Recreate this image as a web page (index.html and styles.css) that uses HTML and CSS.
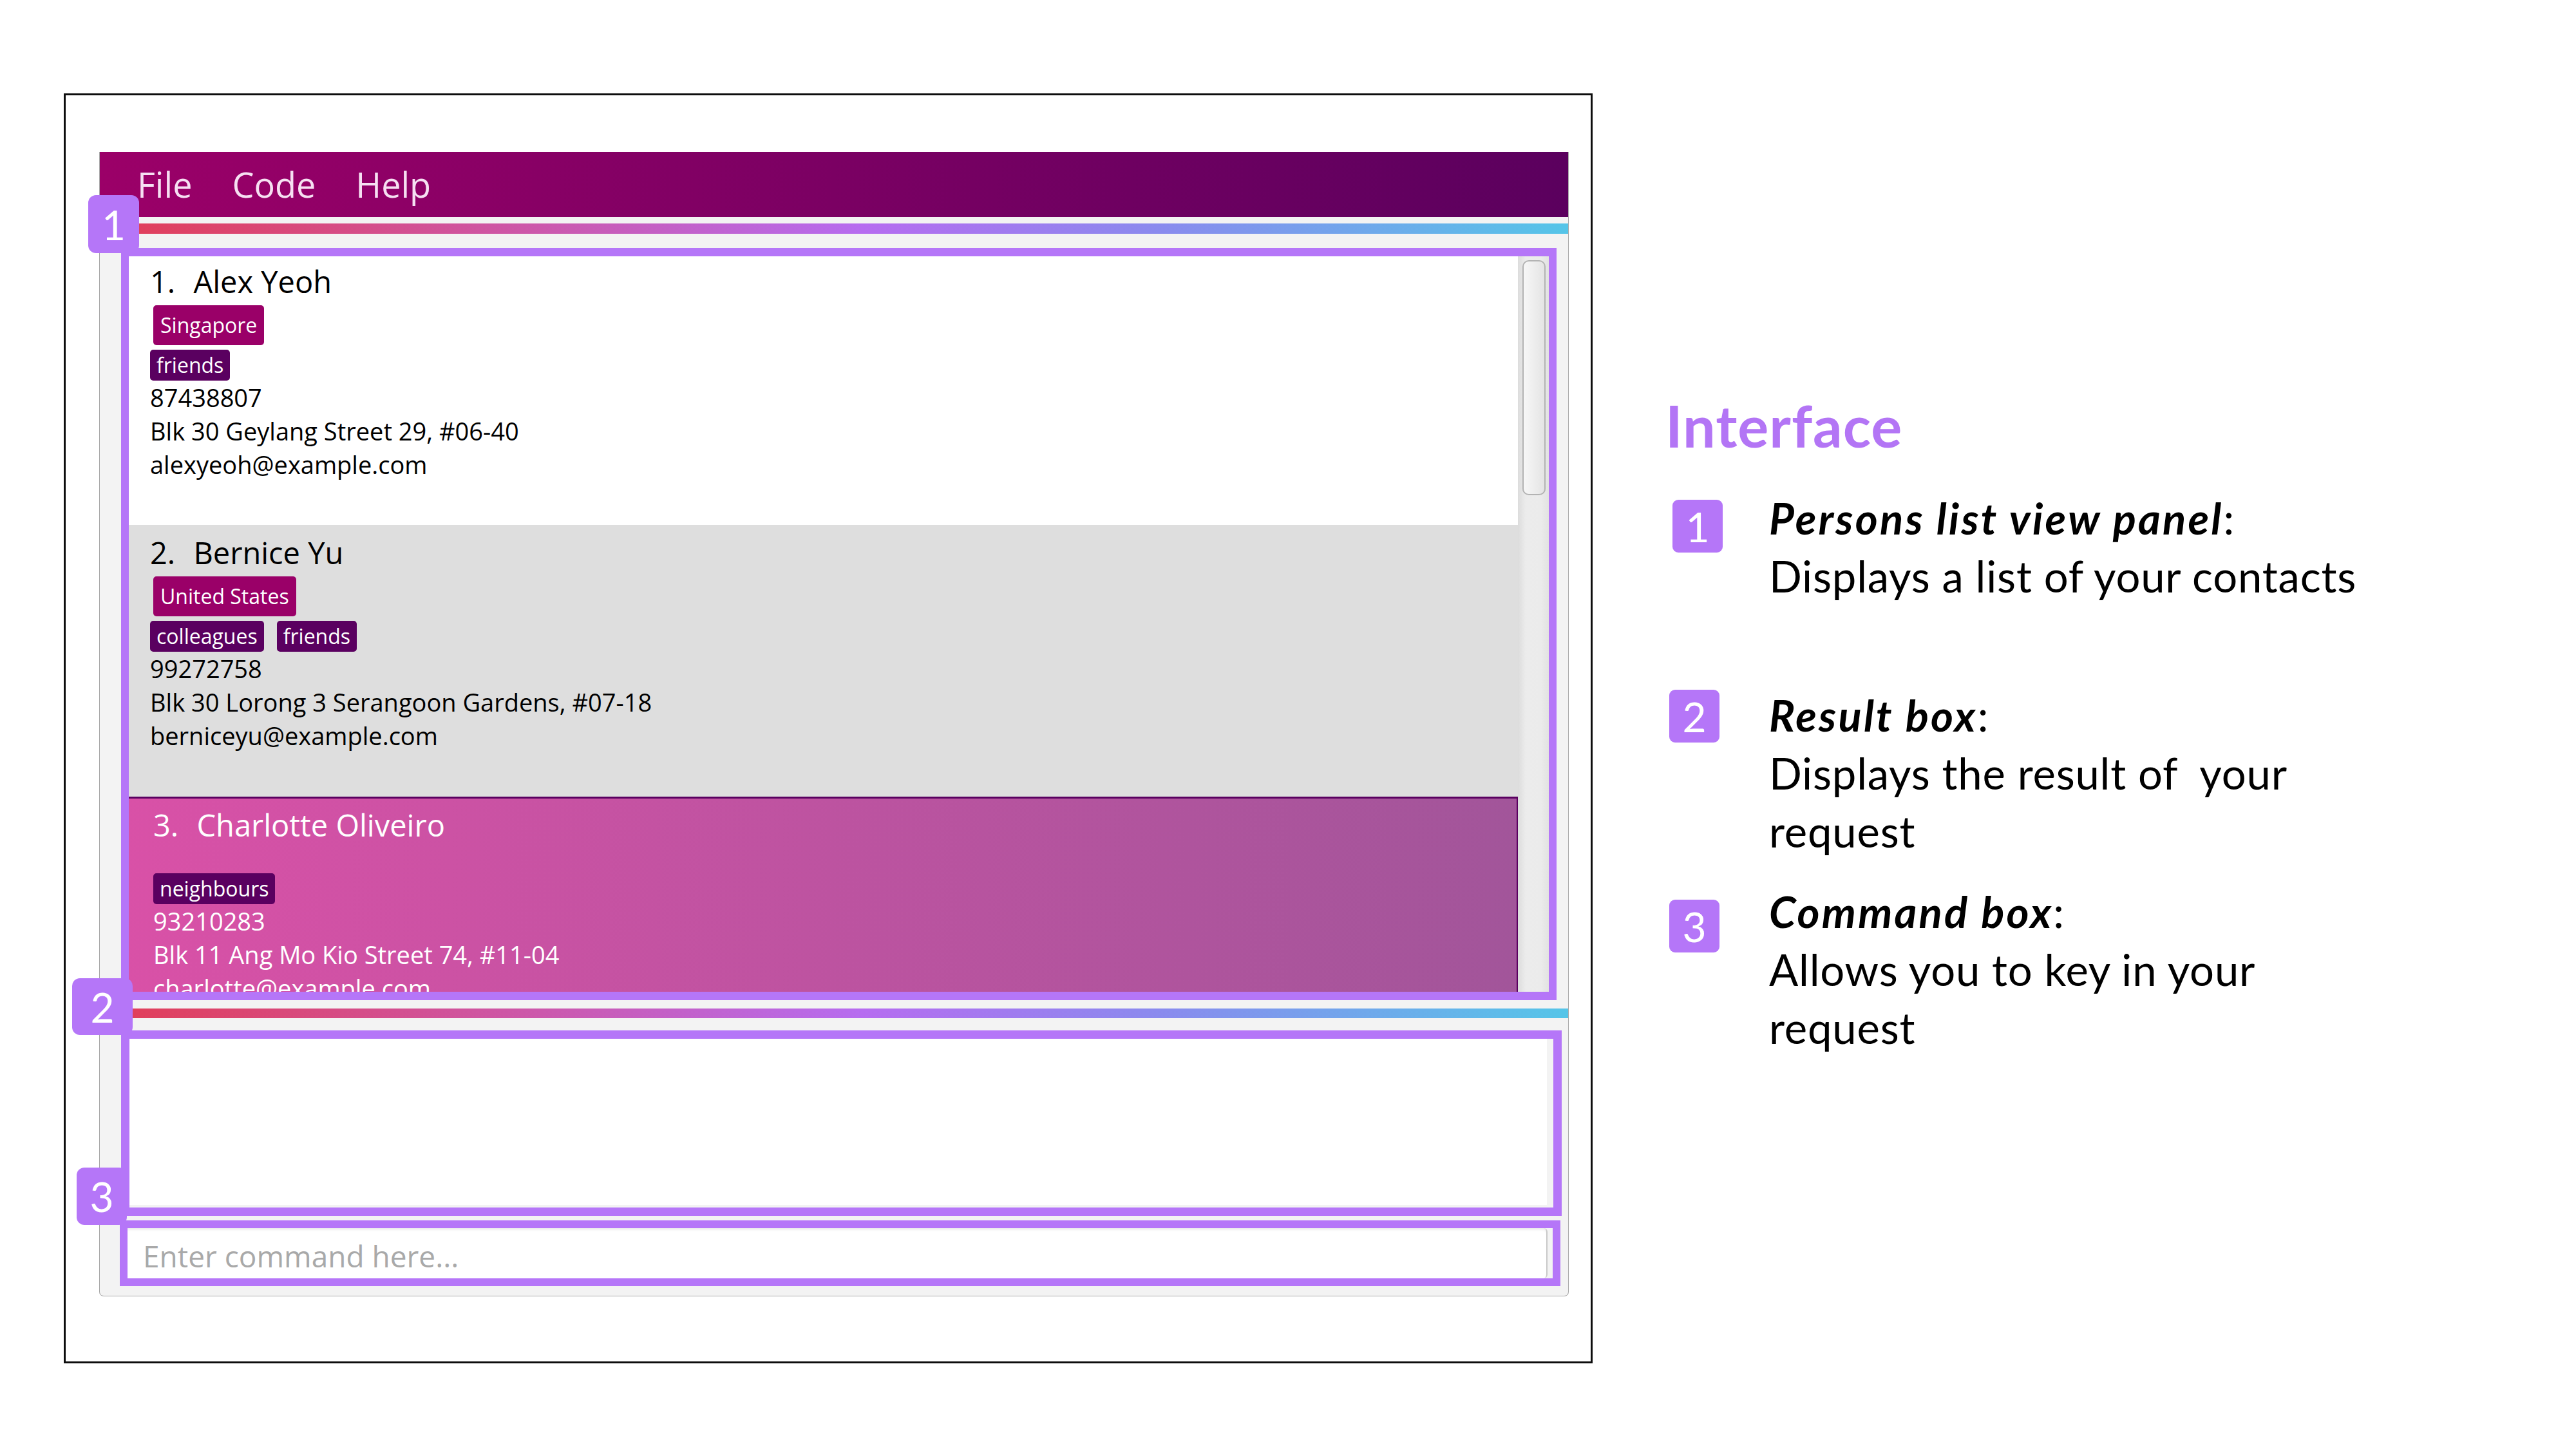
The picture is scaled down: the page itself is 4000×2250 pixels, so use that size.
FILE: index.html
```html
<!DOCTYPE html>
<html lang="en">
<head>
<meta charset="utf-8">
<title>Interface</title>
<link rel="stylesheet" href="styles.css">
</head>
<body>
<div class="page">
  <div class="frame">
    <div class="window">
      <div class="menubar">
        <span class="menu-item">File</span>
        <span class="menu-item">Code</span>
        <span class="menu-item">Help</span>
      </div>
      <div class="stripe"></div>
      <div class="list-panel">
        <div class="list-viewport">
          <div class="list">
            <div class="card">
              <div class="card-title"><span class="idx">1.</span> <span class="name">Alex Yeoh</span></div>
              <div class="tag-row"><span class="tag tag-country">Singapore</span></div>
              <div class="tag-row"><span class="tag">friends</span></div>
              <div class="field">87438807</div>
              <div class="field">Blk 30 Geylang Street 29, #06-40</div>
              <div class="field">alexyeoh@example.com</div>
            </div>
            <div class="card card-alt">
              <div class="card-title"><span class="idx">2.</span> <span class="name">Bernice Yu</span></div>
              <div class="tag-row"><span class="tag tag-country">United States</span></div>
              <div class="tag-row"><span class="tag">colleagues</span><span class="tag">friends</span></div>
              <div class="field">99272758</div>
              <div class="field">Blk 30 Lorong 3 Serangoon Gardens, #07-18</div>
              <div class="field">berniceyu@example.com</div>
            </div>
            <div class="card card-selected">
              <div class="card-title"><span class="idx">3.</span> <span class="name">Charlotte Oliveiro</span></div>
              <div class="tag-row tag-row-empty"></div>
              <div class="tag-row"><span class="tag">neighbours</span></div>
              <div class="field">93210283</div>
              <div class="field">Blk 11 Ang Mo Kio Street 74, #11-04</div>
              <div class="field">charlotte@example.com</div>
            </div>
          </div>
          <div class="scrollbar"><div class="thumb"></div></div>
        </div>
      </div>
      <div class="stripe stripe-2"></div>
      <div class="result-box"><div class="result-area"></div></div>
      <div class="command-box"><div class="command-field">Enter command here...</div></div>
    </div>
    <div class="callout callout-1">1</div>
    <div class="callout callout-2">2</div>
    <div class="callout callout-3">3</div>
  </div>

  <div class="legend">
    <h1 class="legend-title">Interface</h1>
    <div class="legend-item item-1">
      <div class="legend-num">1</div>
      <div class="legend-text"><span class="term">Persons list view panel</span>:<br>Displays a list of your contacts</div>
    </div>
    <div class="legend-item item-2">
      <div class="legend-num">2</div>
      <div class="legend-text"><span class="term">Result box</span>:<br>Displays the result of &nbsp;your<br>request</div>
    </div>
    <div class="legend-item item-3">
      <div class="legend-num">3</div>
      <div class="legend-text"><span class="term">Command box</span>:<br>Allows you to key in your<br>request</div>
    </div>
  </div>
</div>
</body>
</html>
```
FILE: styles.css
```css
* { box-sizing: border-box; }

body {
  margin: 0;
  background: #ffffff;
}

.page {
  display: flex;
  align-items: flex-start;
  padding: 145px 0 0 99px;
}

/* ---------- screenshot frame ---------- */
.frame {
  position: relative;
  flex-shrink: 0;
  width: 2374px;
  height: 1972px;
  border: 3px solid #0d0d0d;
  padding: 88px 0 0 52px;
}

.window {
  width: 2282px;
  background: #f3f3f3;
  border: 1px solid #a9a9a9;
  border-top: none;
  border-radius: 0 0 7px 7px;
  padding-bottom: 15px;
  font-family: "Open Sans", "Noto Sans", sans-serif;
}

.menubar {
  height: 101px;
  display: flex;
  gap: 62px;
  padding-left: 58px;
  background: linear-gradient(90deg, #9b0068 0%, #5b005e 100%);
  color: #f6e0f2;
  font-size: 54px;
  line-height: 101px;
}

.stripe {
  height: 16px;
  margin-top: 10px;
  background: linear-gradient(90deg, #e23d55 0%, #cc58ac 30%, #b66cf0 52%, #8a8aee 72%, #55c5e8 100%);
}

.stripe-2 {
  height: 15px;
  margin-top: 13px;
}

/* ---------- person list ---------- */
.list-panel {
  position: relative;
  margin: 22px 0 0 33px;
  width: 2229px;
  height: 1168px;
  padding: 13px 12px 13px 0;
}

.list-panel::after {
  content: "";
  position: absolute;
  inset: 0;
  border-style: solid;
  border-color: #b576f8;
  border-width: 13px 12px;
  pointer-events: none;
}

.list-viewport {
  display: flex;
  height: 100%;
}

.list {
  flex: 1;
  overflow: hidden;
}

.card {
  height: 417px;
  margin-left: 12px;
  padding: 9px 0 0 33px;
  background: #ffffff;
  color: #000000;
}

.card-alt {
  height: 422px;
  padding-top: 13px;
  background: #dedede;
}

.card-selected {
  height: 420px;
  margin-left: 0;
  padding: 11px 0 0 48px;
  border: 2px solid #5a0060;
  border-top-width: 3px;
  background: linear-gradient(90deg, #d951a7 0%, #a2559a 100%);
  color: #ffffff;
}

.card-title {
  font-size: 47px;
  line-height: 60px;
  white-space: nowrap;
}

.card-title .name {
  margin-left: 16px;
}

.tag-row {
  display: flex;
  gap: 20px;
  margin-top: 7px;
}

.tag-row-empty {
  height: 31px;
}

.tag {
  font-size: 32px;
  line-height: 44px;
  padding: 2px 10px;
  border-radius: 5px;
  background: #5a0060;
  color: #ffffff;
}

.tag-country {
  background: #9a0068;
  padding: 9px 11px;
  margin-left: 5px;
}

.field {
  font-size: 38px;
  line-height: 52px;
  white-space: nowrap;
}

.scrollbar {
  width: 48px;
  padding: 6px 5px 0 7px;
  background: linear-gradient(90deg, #dcdcdc 0%, #ececec 25%, #ebebeb 75%, #e2e2e2 100%);
}

.thumb {
  height: 365px;
  border: 2px solid #b3b3b3;
  border-radius: 10px;
  background: linear-gradient(90deg, #f7f7f7 0%, #e4e4e4 100%);
}

/* ---------- result & command ---------- */
.result-box {
  margin: 19px 0 0 33px;
  width: 2237px;
  height: 288px;
  border: 13px solid #b576f8;
  background: #f3f3f3;
}

.result-area {
  height: 100%;
  background: #ffffff;
  border-right: 10px solid #f3f3f3;
  border-bottom: 4px solid #f3f3f3;
}

.command-box {
  margin: 7px 0 0 31px;
  width: 2237px;
  height: 102px;
  border: 12px solid #b576f8;
  background: #f3f3f3;
  padding-right: 8px;
}

.command-field {
  height: 100%;
  padding-left: 24px;
  background: #ffffff;
  border-right: 2px solid #c9c9c9;
  border-radius: 0 6px 6px 0;
  box-shadow: inset 0 5px 4px -3px #e6e6e6;
  color: #a9a9a9;
  font-size: 46px;
  line-height: 86px;
  white-space: nowrap;
}

/* ---------- callout numbers over the screenshot ---------- */
.callout {
  position: absolute;
  z-index: 3;
  display: flex;
  align-items: center;
  justify-content: center;
  background: #b576f8;
  color: #ffffff;
  border-radius: 12px;
  font-family: Lato, "Open Sans", sans-serif;
  font-size: 64px;
}

.callout-1 { left: 35px; top: 155px; width: 79px; height: 90px; }
.callout-2 { left: 10px; top: 1371px; width: 94px; height: 88px; }
.callout-3 { left: 17px; top: 1665px; width: 78px; height: 89px; }

/* ---------- legend ---------- */
.legend {
  margin: 462px 0 0 113px;
  font-family: Lato, "Open Sans", sans-serif;
  color: #000000;
}

.legend-title {
  margin: 0;
  font-size: 90px;
  font-weight: 700;
  line-height: 107px;
  letter-spacing: 1px;
  color: #b375f5;
}

.legend-item {
  display: flex;
  align-items: flex-start;
}

.legend-num {
  flex-shrink: 0;
  width: 78px;
  height: 82px;
  margin-left: 6px;
  display: flex;
  align-items: center;
  justify-content: center;
  background: #b576f8;
  color: #ffffff;
  border-radius: 9px;
  font-size: 64px;
}

.legend-text {
  margin-left: 77px;
  font-size: 67px;
  line-height: 90px;
  letter-spacing: 0.8px;
  white-space: nowrap;
}

.legend-text .term {
  font-weight: 700;
  font-style: italic;
  letter-spacing: 3.2px;
}

.item-1 { margin-top: 45px; }
.item-1 .legend-num { margin-top: 17px; margin-left: 11px; }
.item-1 .legend-text { margin-left: 72px; }

.item-2 { margin-top: 126px; }
.item-2 .legend-num { margin-top: 6px; }

.item-3 { margin-top: 35px; }
.item-3 .legend-num { margin-top: 27px; }
```
